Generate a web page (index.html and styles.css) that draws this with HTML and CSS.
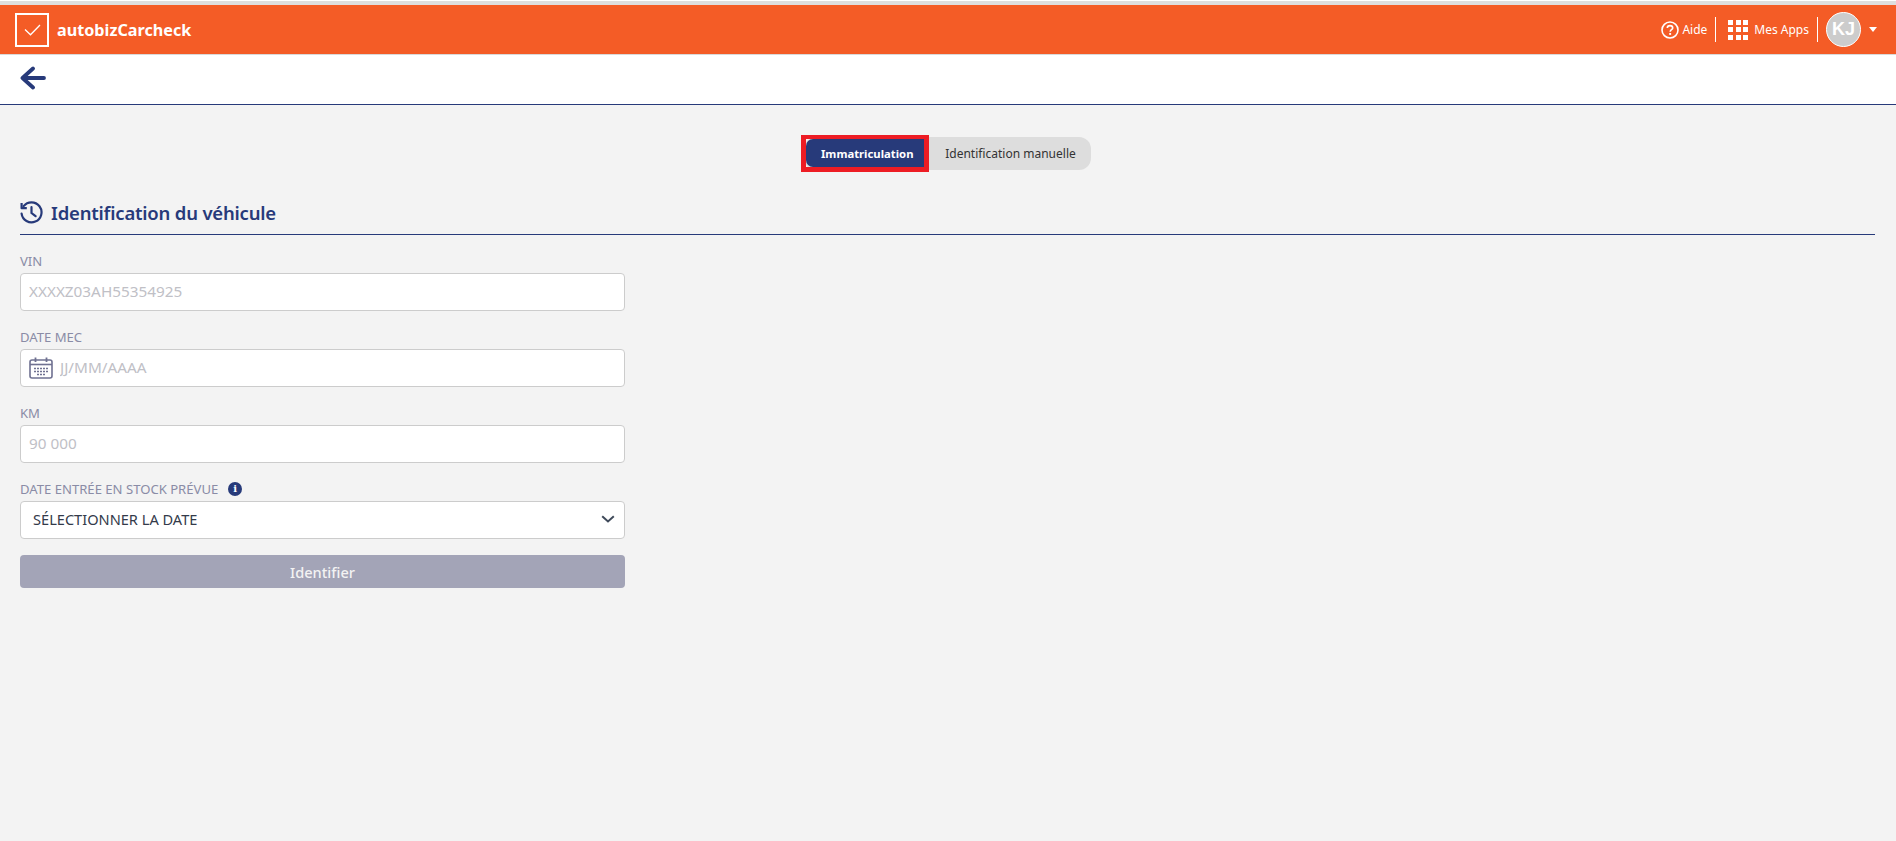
FILE: index.html
```html
<!DOCTYPE html>
<html lang="fr">
<head>
    <meta charset="UTF-8">
    <meta name="viewport" content="width=device-width, initial-scale=1.0">
    <title>autobizCarcheck</title>
    <link rel="stylesheet" href="styles.css">
</head>
<body>
    <header class="navbar">
        <a href="#" class="brand">
            <span class="brand-box">
                <svg width="17" height="12" viewBox="0 0 17 12"><path d="M1 5.5 L6.5 10.8 L16 1" fill="none" stroke="#fff" stroke-width="1.3"/></svg>
            </span>
            <span class="brand-name">autobizCarcheck</span>
        </a>
        <nav class="nav-right">
            <a href="#" class="nav-item">
                <svg width="18" height="18" viewBox="0 0 18 18">
                    <circle cx="9" cy="9" r="8" fill="none" stroke="#fff" stroke-width="1.6"/>
                    <path d="M6.3 7 C6.3 5.3 7.6 4.6 9 4.6 C10.5 4.6 11.7 5.5 11.7 6.9 C11.7 8.6 9.2 8.8 9.2 10.7" fill="none" stroke="#fff" stroke-width="1.6"/>
                    <rect x="8.2" y="12" width="1.9" height="1.9" fill="#fff"/>
                </svg>
                Aide
            </a>
            <span class="nav-sep"></span>
            <a href="#" class="nav-item nav-apps">
                <span class="apps-grid">
                    <i></i><i></i><i></i><i></i><i></i><i></i><i></i><i></i><i></i>
                </span>
                Mes Apps
            </a>
            <span class="nav-sep"></span>
            <span class="avatar">KJ</span>
            <span class="caret"></span>
        </nav>
    </header>

    <div class="subbar">
        <a href="#" class="back-btn">
            <svg width="26" height="24" viewBox="0 0 26 24"><path d="M24 12 H3 M13 2.5 L2.5 12 L13 21.5" fill="none" stroke="#273a7a" stroke-width="3.8" stroke-linecap="round" stroke-linejoin="round"/></svg>
        </a>
    </div>

    <main class="container">
        <div class="tabs-row">
            <div class="tabs">
                <button class="tab tab-active" type="button">Immatriculation</button>
                <button class="tab" type="button">Identification manuelle</button>
            </div>
        </div>

        <h2 class="section-title">
            <svg width="23" height="23" viewBox="0 0 23 23">
                <path d="M3.6 5.2 A10 10 0 1 1 1.6 12.6" fill="none" stroke="#273a7a" stroke-width="2.2" stroke-linecap="round"/>
                <path d="M1.6 2 V7.2 H6.8" fill="none" stroke="#273a7a" stroke-width="2.2" stroke-linejoin="round"/>
                <path d="M11.5 6.2 V12 L15.6 15.2" fill="none" stroke="#273a7a" stroke-width="2.2" stroke-linecap="round"/>
            </svg>
            Identification du véhicule
        </h2>

        <form class="vehicle-form">
            <div class="form-group">
                <label for="vin">VIN</label>
                <input type="text" id="vin" placeholder="XXXXZ03AH55354925">
            </div>
            <div class="form-group">
                <label for="dateMec">DATE MEC</label>
                <div class="date-input">
                    <svg width="24" height="22" viewBox="0 0 24 22">
                        <rect x="1" y="3" width="22" height="18" rx="2" fill="none" stroke="#6f7191" stroke-width="1.6"/>
                        <path d="M1 7.5 H23" stroke="#6f7191" stroke-width="1.6"/>
                        <path d="M6.5 0.5 V5 M17.5 0.5 V5" stroke="#6f7191" stroke-width="1.8"/>
                        <path d="M5 11.5 H19 M5 14.5 H19 M8 17.5 H16" stroke="#6f7191" stroke-width="1.3" stroke-dasharray="2 1"/>
                    </svg>
                    <input type="text" id="dateMec" placeholder="JJ/MM/AAAA">
                </div>
            </div>
            <div class="form-group">
                <label for="km">KM</label>
                <input type="text" id="km" placeholder="90 000">
            </div>
            <div class="form-group">
                <label for="stockDate">DATE ENTRÉE EN STOCK PRÉVUE <span class="info-dot">i</span></label>
                <div class="select-box" id="stockDate">
                    SÉLECTIONNER LA DATE
                    <svg width="14" height="8" viewBox="0 0 14 8"><path d="M1.2 1.2 L7 6.4 L12.8 1.2" fill="none" stroke="#3f4a5a" stroke-width="2"/></svg>
                </div>
            </div>
            <button type="button" class="submit-btn">Identifier</button>
        </form>
    </main>
</body>
</html>
```

FILE: styles.css
```css
html, body {
    height: 100%;
}

body {
    font-family: 'Noto Sans', 'Open Sans', sans-serif;
    background-color: #f3f3f3;
    margin: 0;
    padding: 0;
    border-top: 1px solid #fff;
    box-sizing: border-box;
    overflow: hidden;
}

.navbar {
    background-color: #f45c26;
    border-top: 4px solid #dedede;
    border-bottom: 1px solid #d9d9d9;
    height: 54px;
    box-sizing: border-box;
    display: flex;
    align-items: center;
    justify-content: space-between;
    padding: 0 19px 0 15px;
}

.brand {
    display: flex;
    align-items: center;
    gap: 8px;
    color: #fff;
    text-decoration: none;
}

.brand-box {
    width: 34px;
    height: 34px;
    box-sizing: border-box;
    border: 2px solid #fff;
    display: flex;
    align-items: center;
    justify-content: center;
}

.brand-name {
    font-size: 16.2px;
    font-weight: 700;
}

.nav-right {
    display: flex;
    align-items: center;
}

.nav-item {
    display: flex;
    align-items: center;
    gap: 3px;
    color: #fff;
    font-size: 12px;
    text-decoration: none;
}

.nav-apps {
    gap: 6px;
}

.nav-sep {
    width: 1px;
    height: 25px;
    background-color: #fff;
    margin: 0 8px;
}

.apps-grid {
    width: 20px;
    height: 20px;
    display: grid;
    grid-template-columns: repeat(3, 5px);
    grid-template-rows: repeat(3, 5px);
    justify-content: space-between;
    align-content: space-between;
    margin-left: 4px;
}

.apps-grid i {
    background-color: #fff;
}

.avatar {
    width: 35px;
    height: 35px;
    box-sizing: border-box;
    border-radius: 50%;
    background-color: #ccc;
    border: 1px solid #fff;
    color: #fff;
    font-family: 'Liberation Sans', sans-serif;
    font-weight: 700;
    font-size: 18px;
    display: flex;
    align-items: center;
    justify-content: center;
}

.caret {
    width: 0;
    height: 0;
    border-left: 4.5px solid transparent;
    border-right: 4.5px solid transparent;
    border-top: 5px solid #fff;
    margin-left: 8px;
}

.subbar {
    background-color: #fff;
    height: 49px;
    border-bottom: 1px solid #273a7a;
    padding-left: 20px;
    display: flex;
    align-items: center;
}

.back-btn {
    display: flex;
    margin-top: -4px;
}

.container {
    padding: 0 20px;
    margin-right: 1px;
}

.tabs-row {
    display: flex;
    justify-content: center;
    padding-top: 32px;
}

.tabs {
    display: flex;
    background-color: #ddd;
    border-radius: 12px;
    height: 33px;
    box-sizing: border-box;
    padding: 2px 0 3px 2px;
}

.tab {
    font-family: inherit;
    font-size: 12px;
    color: #333;
    background: none;
    border: none;
    padding: 0 15px;
    border-radius: 7px;
    position: relative;
}

.tab-active {
    width: 118px;
    padding: 0 0 0 4px;
    margin-right: 6px;
    background-color: #273a7a;
    border-radius: 7px 0 0 7px;
    color: #fff;
    font-size: 11.3px;
    font-weight: 700;
}

/* cadre rouge de la capture */
.tab-active::after {
    content: '';
    position: absolute;
    left: -5px;
    right: -5px;
    top: -4px;
    bottom: -5px;
    border: solid #ed1c24;
    border-width: 4px 5px 5px;
}

.section-title {
    display: flex;
    align-items: center;
    gap: 8px;
    margin: 29px 0 0;
    padding-bottom: 8px;
    height: 27px;
    color: #273a7a;
    font-size: 18.5px;
    letter-spacing: -0.2px;
    font-weight: 600;
    border-bottom: 1px solid #273a7a;
}

.vehicle-form {
    width: 605px;
    padding-top: 14px;
}

.form-group {
    margin-bottom: 14px;
}

.form-group label {
    display: flex;
    align-items: center;
    gap: 4px;
    height: 23px;
    margin-bottom: 1px;
    color: #8a8ca6;
    font-size: 13.1px;
}

.form-group input {
    width: 100%;
    height: 38px;
    box-sizing: border-box;
    padding: 0 8px 2px;
    font-family: inherit;
    font-size: 15.3px;
    background-color: #fff;
    border: 1px solid #ccc;
    border-radius: 4px;
}

.form-group input::placeholder {
    color: #c0c0c6;
}

.date-input {
    position: relative;
}

.date-input svg {
    position: absolute;
    left: 9px;
    top: 8px;
}

.date-input input {
    padding-left: 39px;
}

.info-dot {
    width: 14px;
    height: 14px;
    margin-left: 6px;
    border-radius: 50%;
    background-color: #273a7a;
    color: #fff;
    font-family: 'DejaVu Serif', serif;
    font-size: 10px;
    font-weight: 700;
    display: flex;
    align-items: center;
    justify-content: center;
}

.select-box {
    height: 38px;
    box-sizing: border-box;
    display: flex;
    align-items: center;
    justify-content: space-between;
    padding: 0 9px 2px 12px;
    background-color: #fff;
    border: 1px solid #ccc;
    border-radius: 4px;
    color: #333a4a;
    font-size: 14.6px;
}

.submit-btn {
    display: block;
    width: 100%;
    height: 33px;
    margin-top: 16px;
    border: none;
    border-radius: 4px;
    background-color: #a3a4b7;
    color: #f3f3f3;
    font-family: inherit;
    font-size: 14.6px;
    font-weight: 500;
}
```
